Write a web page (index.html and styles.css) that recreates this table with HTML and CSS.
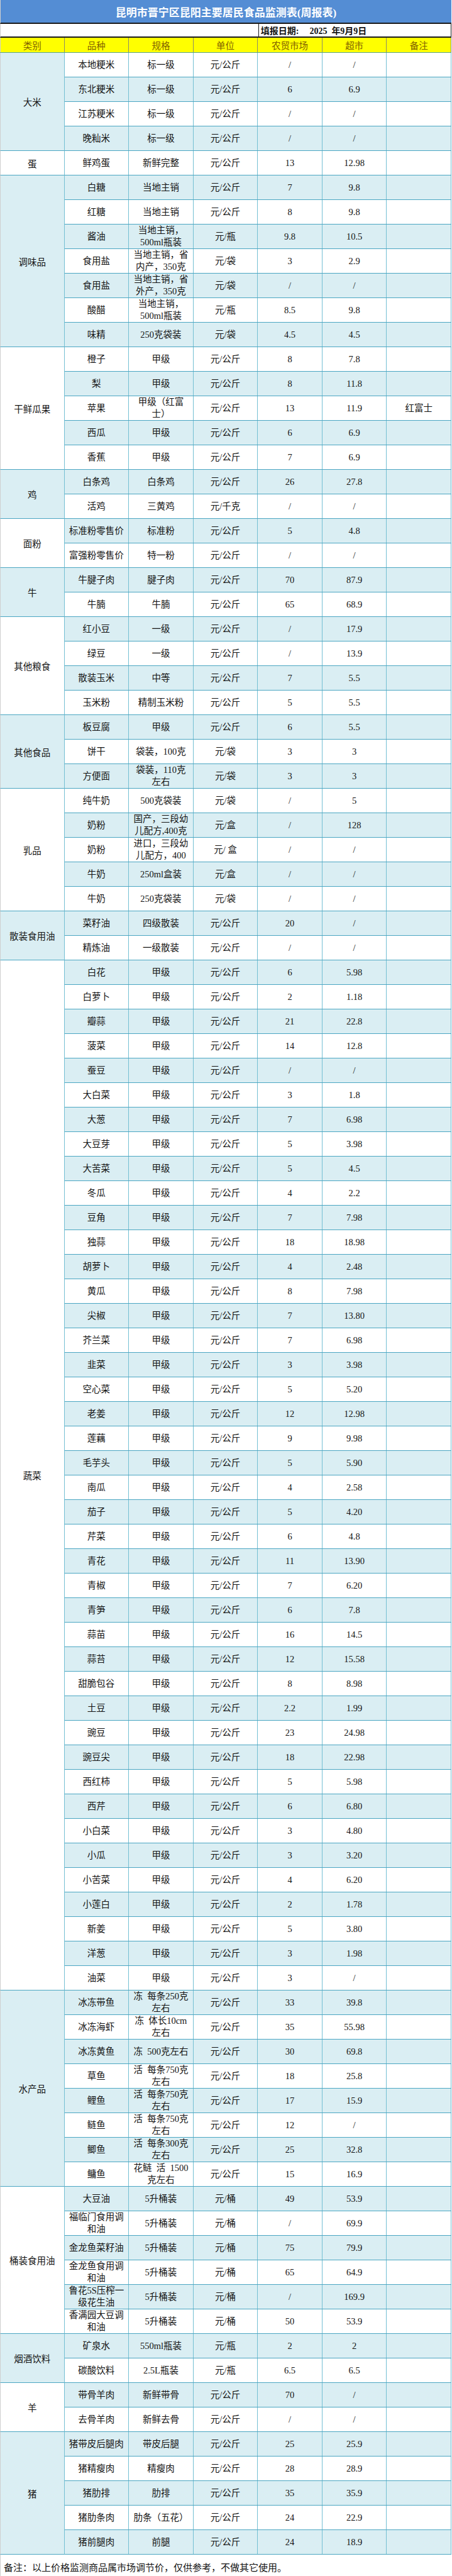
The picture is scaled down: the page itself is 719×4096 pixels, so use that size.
FILE: index.html
```html
<!DOCTYPE html>
<html lang="zh-CN">
<head>
<meta charset="utf-8">
<title>昆明市晋宁区昆阳主要居民食品监测表(周报表)</title>
<link rel="stylesheet" href="styles.css">
</head>
<body>
<div class="sheet">
  <div class="title">昆明市晋宁区昆阳主要居民食品监测表(周报表)</div>
  <div class="date">
    <div class="blank"></div>
    <div class="fill"><span class="lbl">填报日期:</span><span class="val">2025&nbsp;&nbsp;年9月9日</span></div>
  </div>
  <div class="head">
    <div>类别</div><div>品种</div><div>规格</div><div>单位</div><div>农贸市场</div><div>超市</div><div>备注</div>
  </div>

  <div class="group">
    <div class="cat b">大米</div>
    <div class="items">
      <div class="row"><div>本地粳米</div><div>标一级</div><div>元/公斤</div><div>/</div><div>/</div><div></div></div>
      <div class="row b"><div>东北粳米</div><div>标一级</div><div>元/公斤</div><div>6</div><div>6.9</div><div></div></div>
      <div class="row"><div>江苏粳米</div><div>标一级</div><div>元/公斤</div><div>/</div><div>/</div><div></div></div>
      <div class="row b"><div>晚籼米</div><div>标一级</div><div>元/公斤</div><div>/</div><div>/</div><div></div></div>
    </div>
  </div>

  <div class="group">
    <div class="cat">蛋</div>
    <div class="items">
      <div class="row"><div>鲜鸡蛋</div><div>新鲜完整</div><div>元/公斤</div><div>13</div><div>12.98</div><div></div></div>
    </div>
  </div>

  <div class="group">
    <div class="cat b">调味品</div>
    <div class="items">
      <div class="row b"><div>白糖</div><div>当地主销</div><div>元/公斤</div><div>7</div><div>9.8</div><div></div></div>
      <div class="row"><div>红糖</div><div>当地主销</div><div>元/公斤</div><div>8</div><div>9.8</div><div></div></div>
      <div class="row b"><div>酱油</div><div>当地主销，<br>500ml瓶装</div><div>元/瓶</div><div>9.8</div><div>10.5</div><div></div></div>
      <div class="row"><div>食用盐</div><div>当地主销，省<br>内产，350克</div><div>元/袋</div><div>3</div><div>2.9</div><div></div></div>
      <div class="row b"><div>食用盐</div><div>当地主销，省<br>外产，350克</div><div>元/袋</div><div>/</div><div>/</div><div></div></div>
      <div class="row"><div>酸醋</div><div>当地主销，<br>500ml瓶装</div><div>元/瓶</div><div>8.5</div><div>9.8</div><div></div></div>
      <div class="row b"><div>味精</div><div>250克袋装</div><div>元/袋</div><div>4.5</div><div>4.5</div><div></div></div>
    </div>
  </div>

  <div class="group">
    <div class="cat">干鲜瓜果</div>
    <div class="items">
      <div class="row"><div>橙子</div><div>甲级</div><div>元/公斤</div><div>8</div><div>7.8</div><div></div></div>
      <div class="row b"><div>梨</div><div>甲级</div><div>元/公斤</div><div>8</div><div>11.8</div><div></div></div>
      <div class="row"><div>苹果</div><div>甲级（红富<br>士）</div><div>元/公斤</div><div>13</div><div>11.9</div><div>红富士</div></div>
      <div class="row b"><div>西瓜</div><div>甲级</div><div>元/公斤</div><div>6</div><div>6.9</div><div></div></div>
      <div class="row"><div>香蕉</div><div>甲级</div><div>元/公斤</div><div>7</div><div>6.9</div><div></div></div>
    </div>
  </div>

  <div class="group">
    <div class="cat b">鸡</div>
    <div class="items">
      <div class="row b"><div>白条鸡</div><div>白条鸡</div><div>元/公斤</div><div>26</div><div>27.8</div><div></div></div>
      <div class="row"><div>活鸡</div><div>三黄鸡</div><div>元/千克</div><div>/</div><div>/</div><div></div></div>
    </div>
  </div>

  <div class="group">
    <div class="cat">面粉</div>
    <div class="items">
      <div class="row b"><div>标准粉零售价</div><div>标准粉</div><div>元/公斤</div><div>5</div><div>4.8</div><div></div></div>
      <div class="row"><div>富强粉零售价</div><div>特一粉</div><div>元/公斤</div><div>/</div><div>/</div><div></div></div>
    </div>
  </div>

  <div class="group">
    <div class="cat b">牛</div>
    <div class="items">
      <div class="row b"><div>牛腱子肉</div><div>腱子肉</div><div>元/公斤</div><div>70</div><div>87.9</div><div></div></div>
      <div class="row"><div>牛腩</div><div>牛腩</div><div>元/公斤</div><div>65</div><div>68.9</div><div></div></div>
    </div>
  </div>

  <div class="group">
    <div class="cat">其他粮食</div>
    <div class="items">
      <div class="row b"><div>红小豆</div><div>一级</div><div>元/公斤</div><div>/</div><div>17.9</div><div></div></div>
      <div class="row"><div>绿豆</div><div>一级</div><div>元/公斤</div><div>/</div><div>13.9</div><div></div></div>
      <div class="row b"><div>散装玉米</div><div>中等</div><div>元/公斤</div><div>7</div><div>5.5</div><div></div></div>
      <div class="row"><div>玉米粉</div><div>精制玉米粉</div><div>元/公斤</div><div>5</div><div>5.5</div><div></div></div>
    </div>
  </div>

  <div class="group">
    <div class="cat b">其他食品</div>
    <div class="items">
      <div class="row b"><div>板豆腐</div><div>甲级</div><div>元/公斤</div><div>6</div><div>5.5</div><div></div></div>
      <div class="row"><div>饼干</div><div>袋装，100克</div><div>元/袋</div><div>3</div><div>3</div><div></div></div>
      <div class="row b"><div>方便面</div><div>袋装，110克<br>左右</div><div>元/袋</div><div>3</div><div>3</div><div></div></div>
    </div>
  </div>

  <div class="group">
    <div class="cat">乳品</div>
    <div class="items">
      <div class="row"><div>纯牛奶</div><div>500克袋装</div><div>元/袋</div><div>/</div><div>5</div><div></div></div>
      <div class="row b"><div>奶粉</div><div>国产，三段幼<br>儿配方,400克</div><div>元/盒</div><div>/</div><div>128</div><div></div></div>
      <div class="row"><div>奶粉</div><div>进口，三段幼<br>儿配方，400</div><div>元/&nbsp;盒</div><div>/</div><div>/</div><div></div></div>
      <div class="row b"><div>牛奶</div><div>250ml盒装</div><div>元/盒</div><div>/</div><div>/</div><div></div></div>
      <div class="row"><div>牛奶</div><div>250克袋装</div><div>元/袋</div><div>/</div><div>/</div><div></div></div>
    </div>
  </div>

  <div class="group">
    <div class="cat b">散装食用油</div>
    <div class="items">
      <div class="row b"><div>菜籽油</div><div>四级散装</div><div>元/公斤</div><div>20</div><div>/</div><div></div></div>
      <div class="row"><div>精炼油</div><div>一级散装</div><div>元/公斤</div><div>/</div><div>/</div><div></div></div>
    </div>
  </div>

  <div class="group">
    <div class="cat">蔬菜</div>
    <div class="items">
      <div class="row b"><div>白花</div><div>甲级</div><div>元/公斤</div><div>6</div><div>5.98</div><div></div></div>
      <div class="row"><div>白萝卜</div><div>甲级</div><div>元/公斤</div><div>2</div><div>1.18</div><div></div></div>
      <div class="row b"><div>瓣蒜</div><div>甲级</div><div>元/公斤</div><div>21</div><div>22.8</div><div></div></div>
      <div class="row"><div>菠菜</div><div>甲级</div><div>元/公斤</div><div>14</div><div>12.8</div><div></div></div>
      <div class="row b"><div>蚕豆</div><div>甲级</div><div>元/公斤</div><div>/</div><div>/</div><div></div></div>
      <div class="row"><div>大白菜</div><div>甲级</div><div>元/公斤</div><div>3</div><div>1.8</div><div></div></div>
      <div class="row b"><div>大葱</div><div>甲级</div><div>元/公斤</div><div>7</div><div>6.98</div><div></div></div>
      <div class="row"><div>大豆芽</div><div>甲级</div><div>元/公斤</div><div>5</div><div>3.98</div><div></div></div>
      <div class="row b"><div>大苦菜</div><div>甲级</div><div>元/公斤</div><div>5</div><div>4.5</div><div></div></div>
      <div class="row"><div>冬瓜</div><div>甲级</div><div>元/公斤</div><div>4</div><div>2.2</div><div></div></div>
      <div class="row b"><div>豆角</div><div>甲级</div><div>元/公斤</div><div>7</div><div>7.98</div><div></div></div>
      <div class="row"><div>独蒜</div><div>甲级</div><div>元/公斤</div><div>18</div><div>18.98</div><div></div></div>
      <div class="row b"><div>胡萝卜</div><div>甲级</div><div>元/公斤</div><div>4</div><div>2.48</div><div></div></div>
      <div class="row"><div>黄瓜</div><div>甲级</div><div>元/公斤</div><div>8</div><div>7.98</div><div></div></div>
      <div class="row b"><div>尖椒</div><div>甲级</div><div>元/公斤</div><div>7</div><div>13.80</div><div></div></div>
      <div class="row"><div>芥兰菜</div><div>甲级</div><div>元/公斤</div><div>7</div><div>6.98</div><div></div></div>
      <div class="row b"><div>韭菜</div><div>甲级</div><div>元/公斤</div><div>3</div><div>3.98</div><div></div></div>
      <div class="row"><div>空心菜</div><div>甲级</div><div>元/公斤</div><div>5</div><div>5.20</div><div></div></div>
      <div class="row b"><div>老姜</div><div>甲级</div><div>元/公斤</div><div>12</div><div>12.98</div><div></div></div>
      <div class="row"><div>莲藕</div><div>甲级</div><div>元/公斤</div><div>9</div><div>9.98</div><div></div></div>
      <div class="row b"><div>毛芋头</div><div>甲级</div><div>元/公斤</div><div>5</div><div>5.90</div><div></div></div>
      <div class="row"><div>南瓜</div><div>甲级</div><div>元/公斤</div><div>4</div><div>2.58</div><div></div></div>
      <div class="row b"><div>茄子</div><div>甲级</div><div>元/公斤</div><div>5</div><div>4.20</div><div></div></div>
      <div class="row"><div>芹菜</div><div>甲级</div><div>元/公斤</div><div>6</div><div>4.8</div><div></div></div>
      <div class="row b"><div>青花</div><div>甲级</div><div>元/公斤</div><div>11</div><div>13.90</div><div></div></div>
      <div class="row"><div>青椒</div><div>甲级</div><div>元/公斤</div><div>7</div><div>6.20</div><div></div></div>
      <div class="row b"><div>青笋</div><div>甲级</div><div>元/公斤</div><div>6</div><div>7.8</div><div></div></div>
      <div class="row"><div>蒜苗</div><div>甲级</div><div>元/公斤</div><div>16</div><div>14.5</div><div></div></div>
      <div class="row b"><div>蒜苔</div><div>甲级</div><div>元/公斤</div><div>12</div><div>15.58</div><div></div></div>
      <div class="row"><div>甜脆包谷</div><div>甲级</div><div>元/公斤</div><div>8</div><div>8.98</div><div></div></div>
      <div class="row b"><div>土豆</div><div>甲级</div><div>元/公斤</div><div>2.2</div><div>1.99</div><div></div></div>
      <div class="row"><div>豌豆</div><div>甲级</div><div>元/公斤</div><div>23</div><div>24.98</div><div></div></div>
      <div class="row b"><div>豌豆尖</div><div>甲级</div><div>元/公斤</div><div>18</div><div>22.98</div><div></div></div>
      <div class="row"><div>西红柿</div><div>甲级</div><div>元/公斤</div><div>5</div><div>5.98</div><div></div></div>
      <div class="row b"><div>西芹</div><div>甲级</div><div>元/公斤</div><div>6</div><div>6.80</div><div></div></div>
      <div class="row"><div>小白菜</div><div>甲级</div><div>元/公斤</div><div>3</div><div>4.80</div><div></div></div>
      <div class="row b"><div>小瓜</div><div>甲级</div><div>元/公斤</div><div>3</div><div>3.20</div><div></div></div>
      <div class="row"><div>小苦菜</div><div>甲级</div><div>元/公斤</div><div>4</div><div>6.20</div><div></div></div>
      <div class="row b"><div>小莲白</div><div>甲级</div><div>元/公斤</div><div>2</div><div>1.78</div><div></div></div>
      <div class="row"><div>新姜</div><div>甲级</div><div>元/公斤</div><div>5</div><div>3.80</div><div></div></div>
      <div class="row b"><div>洋葱</div><div>甲级</div><div>元/公斤</div><div>3</div><div>1.98</div><div></div></div>
      <div class="row"><div>油菜</div><div>甲级</div><div>元/公斤</div><div>3</div><div>/</div><div></div></div>
    </div>
  </div>

  <div class="group">
    <div class="cat b">水产品</div>
    <div class="items">
      <div class="row b"><div>冰冻带鱼</div><div>冻&nbsp;&nbsp;每条250克<br>左右</div><div>元/公斤</div><div>33</div><div>39.8</div><div></div></div>
      <div class="row"><div>冰冻海虾</div><div>冻&nbsp;&nbsp;体长10cm<br>左右</div><div>元/公斤</div><div>35</div><div>55.98</div><div></div></div>
      <div class="row b"><div>冰冻黄鱼</div><div>冻&nbsp;&nbsp;500克左右</div><div>元/公斤</div><div>30</div><div>69.8</div><div></div></div>
      <div class="row"><div>草鱼</div><div>活&nbsp;&nbsp;每条750克<br>左右</div><div>元/公斤</div><div>18</div><div>25.8</div><div></div></div>
      <div class="row b"><div>鲤鱼</div><div>活&nbsp;&nbsp;每条750克<br>左右</div><div>元/公斤</div><div>17</div><div>15.9</div><div></div></div>
      <div class="row"><div>鲢鱼</div><div>活&nbsp;&nbsp;每条750克<br>左右</div><div>元/公斤</div><div>12</div><div>/</div><div></div></div>
      <div class="row b"><div>鲫鱼</div><div>活&nbsp;&nbsp;每条300克<br>左右</div><div>元/公斤</div><div>25</div><div>32.8</div><div></div></div>
      <div class="row"><div>鳙鱼</div><div>花鲢&nbsp;&nbsp;活&nbsp;&nbsp;1500<br>克左右</div><div>元/公斤</div><div>15</div><div>16.9</div><div></div></div>
    </div>
  </div>

  <div class="group">
    <div class="cat">桶装食用油</div>
    <div class="items">
      <div class="row b"><div>大豆油</div><div>5升桶装</div><div>元/桶</div><div>49</div><div>53.9</div><div></div></div>
      <div class="row"><div>福临门食用调<br>和油</div><div>5升桶装</div><div>元/桶</div><div>/</div><div>69.9</div><div></div></div>
      <div class="row b"><div>金龙鱼菜籽油</div><div>5升桶装</div><div>元/桶</div><div>75</div><div>79.9</div><div></div></div>
      <div class="row"><div>金龙鱼食用调<br>和油</div><div>5升桶装</div><div>元/桶</div><div>65</div><div>64.9</div><div></div></div>
      <div class="row b"><div>鲁花5S压榨一<br>级花生油</div><div>5升桶装</div><div>元/桶</div><div>/</div><div>169.9</div><div></div></div>
      <div class="row"><div>香满园大豆调<br>和油</div><div>5升桶装</div><div>元/桶</div><div>50</div><div>53.9</div><div></div></div>
    </div>
  </div>

  <div class="group">
    <div class="cat b">烟酒饮料</div>
    <div class="items">
      <div class="row b"><div>矿泉水</div><div>550ml瓶装</div><div>元/瓶</div><div>2</div><div>2</div><div></div></div>
      <div class="row"><div>碳酸饮料</div><div>2.5L瓶装</div><div>元/瓶</div><div>6.5</div><div>6.5</div><div></div></div>
    </div>
  </div>

  <div class="group">
    <div class="cat">羊</div>
    <div class="items">
      <div class="row b"><div>带骨羊肉</div><div>新鲜带骨</div><div>元/公斤</div><div>70</div><div>/</div><div></div></div>
      <div class="row"><div>去骨羊肉</div><div>新鲜去骨</div><div>元/公斤</div><div>/</div><div>/</div><div></div></div>
    </div>
  </div>

  <div class="group">
    <div class="cat b">猪</div>
    <div class="items">
      <div class="row b"><div>猪带皮后腿肉</div><div>带皮后腿</div><div>元/公斤</div><div>25</div><div>25.9</div><div></div></div>
      <div class="row"><div>猪精瘦肉</div><div>精瘦肉</div><div>元/公斤</div><div>28</div><div>28.9</div><div></div></div>
      <div class="row b"><div>猪肋排</div><div>肋排</div><div>元/公斤</div><div>35</div><div>35.9</div><div></div></div>
      <div class="row"><div>猪肋条肉</div><div>肋条（五花）</div><div>元/公斤</div><div>24</div><div>22.9</div><div></div></div>
      <div class="row b"><div>猪前腿肉</div><div>前腿</div><div>元/公斤</div><div>24</div><div>18.9</div><div></div></div>
    </div>
  </div>

  <div class="note">备注：以上价格监测商品属市场调节价，仅供参考，不做其它使用。</div>
</div>
</body>
</html>
```

FILE: styles.css
```css
* {
  box-sizing: border-box;
}

html, body {
  margin: 0;
  padding: 0;
  background: #ffffff;
}

body {
  font-family: "Liberation Serif", "Noto Sans CJK SC", serif;
  color: #141414;
  font-size: 14.5px;
}

.sheet {
  width: 718px;
}

.title {
  height: 38px;
  background: #548dd4;
  color: #ffffff;
  font-size: 17px;
  font-weight: bold;
  display: flex;
  align-items: center;
  justify-content: center;
  border-bottom: 2px solid #1a1a1a;
  border-left: 1px solid #cfcfcf;
}

.date {
  height: 22px;
  display: grid;
  grid-template-columns: 4fr 3fr;
  border-bottom: 2px solid #1a1a1a;
  border-left: 1px solid #cfcfcf;
}

.date .fill {
  border-left: 1px solid #1a1a1a;
  border-right: 1px solid #1a1a1a;
  display: flex;
  align-items: center;
  font-weight: bold;
  font-size: 14px;
  padding-left: 3px;
  white-space: nowrap;
}

.date .val {
  margin-left: 17px;
}

.head {
  height: 24px;
  display: grid;
  grid-template-columns: repeat(7, 1fr);
  background: #ffff00;
  border-bottom: 1px solid #5aa58a;
}

.head > div {
  display: flex;
  align-items: center;
  justify-content: center;
  color: #7f5f00;
  border-right: 1px solid #8c8c6a;
}

.head > div:first-child {
  border-left: 1px solid #cfcfcf;
}

.group {
  display: grid;
  grid-template-columns: 1fr 6fr;
}

.cat {
  display: flex;
  align-items: center;
  justify-content: center;
  border-left: 1px solid #cfcfcf;
  border-right: 1px solid #74bfd3;
  border-bottom: 1px solid #4ba6c2;
  white-space: nowrap;
}

.items {
  display: flex;
  flex-direction: column;
}

.row {
  height: 39px;
  display: grid;
  grid-template-columns: repeat(6, 1fr);
  border-bottom: 1px solid #4ba6c2;
}

.row > div {
  display: flex;
  align-items: center;
  justify-content: center;
  text-align: center;
  line-height: 19px;
  white-space: nowrap;
  overflow: hidden;
  border-right: 1px solid #74bfd3;
}

.b {
  background: #daeef3;
}

.note {
  height: 34px;
  display: flex;
  align-items: center;
  padding-left: 5px;
  padding-top: 4px;
  font-size: 15px;
  border-left: 1px solid #cfcfcf;
  white-space: nowrap;
}
```
